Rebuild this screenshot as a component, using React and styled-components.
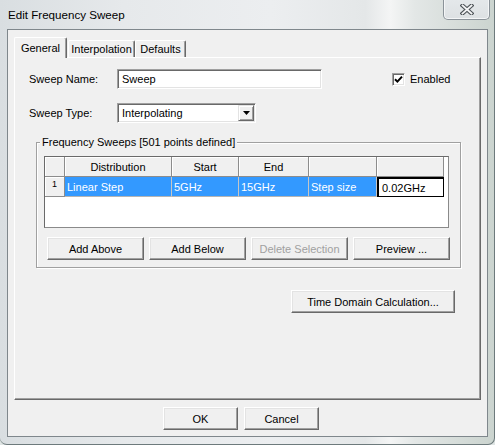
import React from "react";
import styled, { createGlobalStyle } from "styled-components";

const Global = createGlobalStyle`
  html, body { margin: 0; padding: 0; background: #dfe5e4; }
  body { font-family: "Liberation Sans", Arial, sans-serif; }
`;

const Window = styled.div`
  width: 495px;
  height: 445px;
  box-sizing: border-box;
  display: flex;
  flex-direction: column;
  border-right: 1px solid #6d7a7c;
  border-bottom: 1px solid #6d7a7c;
  border-radius: 0 0 7px 7px;
  overflow: hidden;
  background: linear-gradient(90deg, #d9dee1 0%, #e6e9eb 25%, #eceef0 55%, #e4e7e8 74%, #f4f5f5 79%, #e3e7e6 84%, #cbd4cf 100%);
  font-family: "Liberation Sans", Arial, sans-serif;
  font-size: 11px;
  color: #000;
`;

const TitleBar = styled.div`
  height: 29px;
  display: flex;
  align-items: flex-start;
  padding-left: 8px;
  box-sizing: border-box;
`;

const Title = styled.span`
  font-size: 11.6px;
  line-height: 29px;
  color: #000;
`;

const CloseButton = styled.div`
  margin-left: auto;
  margin-right: 4px;
  width: 47px;
  height: 20px;
  box-sizing: border-box;
  border: 1px solid #8b9399;
  border-top: none;
  border-radius: 0 0 5px 5px;
  box-shadow: inset 0 -1px 0 #f4f6f7, inset 1px 0 0 #f4f6f7, inset -1px 0 0 #f4f6f7;
  background: linear-gradient(180deg, #e4e8ea 0%, #dde1e3 100%);
  display: flex;
  align-items: center;
  justify-content: center;
`;

const Client = styled.div`
  margin: 0 6px 0 7px;
  height: 408px;
  box-sizing: border-box;
  border: 1px solid #7f878c;
  background: #f0f0f0;
  padding: 7px 0 0 6px;
  display: flex;
  flex-direction: column;
`;

const TabStrip = styled.div`
  display: flex;
  align-items: flex-end;
  height: 20px;
  position: relative;
  z-index: 1;
`;

const Tab = styled.div`
  width: ${(p) => p.$w}px;
  height: ${(p) => (p.$active ? 21 : 17)}px;
  margin-bottom: ${(p) => (p.$active ? -1 : 0)}px;
  margin-left: ${(p) => p.$ml || 0}px;
  box-sizing: border-box;
  border: 1px solid;
  border-color: #fff #696969 transparent #fff;
  border-bottom: none;
  border-radius: 2px 2px 0 0;
  box-shadow: inset -1px 0 0 #a0a0a0;
  background: #f0f0f0;
  display: flex;
  align-items: center;
  justify-content: center;
  padding-bottom: ${(p) => (p.$active ? 1 : 0)}px;
  font-size: 11px;
`;

const Panel = styled.div`
  width: 467px;
  height: 343px;
  box-sizing: border-box;
  border: 1px solid;
  border-color: #fff #696969 #696969 #fff;
  box-shadow: inset -1px -1px 0 #a0a0a0;
  background: #f0f0f0;
  padding: 11px 0 0 14px;
  display: flex;
  flex-direction: column;
`;

const Row = styled.div`
  display: flex;
  align-items: center;
  height: 20px;
  margin-top: ${(p) => p.$mt || 0}px;
`;

const Label = styled.span`
  width: 88px;
  flex: none;
`;

const Sunken = styled.div`
  width: ${(p) => p.$w}px;
  height: 20px;
  box-sizing: border-box;
  border: 1px solid;
  border-color: #a0a0a0 #fff #fff #a0a0a0;
  box-shadow: inset 1px 1px 0 #696969, inset -1px -1px 0 #e3e3e3;
  background: #fff;
  display: flex;
  align-items: center;
  padding: 0 1px 0 4px;
`;

const DropButton = styled.div`
  margin-left: auto;
  width: 16px;
  height: 16px;
  box-sizing: border-box;
  border: 1px solid;
  border-color: #e3e3e3 #696969 #696969 #e3e3e3;
  box-shadow: inset 1px 1px 0 #fff, inset -1px -1px 0 #a0a0a0;
  background: #f0f0f0;
  display: flex;
  align-items: center;
  justify-content: center;
`;

const CheckWrap = styled.label`
  margin-left: 70px;
  display: flex;
  align-items: center;
  gap: 5px;
`;

const CheckBox = styled.span`
  width: 13px;
  height: 13px;
  box-sizing: border-box;
  border: 1px solid;
  border-color: #a0a0a0 #fff #fff #a0a0a0;
  box-shadow: inset 1px 1px 0 #696969, inset -1px -1px 0 #e3e3e3;
  background: #fff;
  display: flex;
  align-items: center;
  justify-content: center;
`;

const GroupBox = styled.div`
  position: relative;
  margin: 19px 0 0 7px;
  width: 425px;
  height: 126px;
  box-sizing: border-box;
  border: 1px solid #a0a0a0;
  box-shadow: inset 1px 1px 0 #fff, 1px 1px 0 #fff;
  padding: 13px 0 0 7px;
  display: flex;
  flex-direction: column;
`;

const Legend = styled.span`
  position: absolute;
  left: 3px;
  top: -8px;
  padding: 0 2px;
  background: #f0f0f0;
  line-height: 14px;
`;

const Grid = styled.div`
  width: 405px;
  height: 72px;
  box-sizing: border-box;
  border: 1px solid #6a6a6a;
  border-right-color: #8a8a8a;
  border-bottom-color: #8a8a8a;
  background: #fff;
  display: grid;
  grid-template-columns: 20px 107px 67px 70px 68px 67px;
  grid-auto-rows: 20px;
  align-content: start;
`;

const HeadCell = styled.div`
  box-sizing: border-box;
  background: #f0f0f0;
  border-right: 1px solid #8c8c8c;
  border-bottom: 1px solid #8c8c8c;
  box-shadow: inset 1px 1px 0 #fff;
  display: flex;
  align-items: ${(p) => (p.$top ? "flex-start" : "center")};
  justify-content: center;
  font-size: ${(p) => (p.$small ? 9 : 11)}px;
  padding-top: ${(p) => (p.$top ? 2 : 0)}px;
`;

const DataCell = styled.div`
  box-sizing: border-box;
  background: #3399ff;
  color: #fff;
  border-right: 1px solid #c6c6c6;
  border-bottom: 1px solid #b4b4b4;
  display: flex;
  align-items: center;
  padding-left: 2px;
  white-space: nowrap;
`;

const EditCell = styled.div`
  box-sizing: border-box;
  background: #fff;
  color: #000;
  border-style: solid;
  border-color: #000;
  border-width: 2px 1px 1px 2px;
  display: flex;
  align-items: center;
  padding-left: 3px;
`;

const ButtonRow = styled.div`
  display: flex;
  gap: ${(p) => p.$gap}px;
  margin-top: ${(p) => p.$mt}px;
  padding-left: ${(p) => p.$pl || 0}px;
`;

const Button = styled.button`
  width: ${(p) => p.$w}px;
  height: 23px;
  margin-top: ${(p) => p.$mt || 0}px;
  margin-left: ${(p) => p.$ml || 0}px;
  box-sizing: border-box;
  border: 1px solid;
  border-color: #fff #696969 #696969 #fff;
  box-shadow: inset -1px -1px 0 #a0a0a0, inset 1px 1px 0 #e3e3e3;
  background: #f0f0f0;
  font-family: "Liberation Sans", Arial, sans-serif;
  font-size: 11px;
  color: ${(p) => (p.disabled ? "#a0a0a0" : "#000")};
  padding: 0;
  flex: none;
`;

export default function App() {
  return (
    <>
      <Global />
      <Window>
        <TitleBar>
          <Title>Edit Frequency Sweep</Title>
          <CloseButton>
            <svg width="14" height="11" viewBox="0 0 14 11">
              <path d="M2.5 1.5 L11.5 9.5 M11.5 1.5 L2.5 9.5" stroke="#4f5559" strokeWidth="4" strokeLinecap="square" />
              <path d="M2.5 1.5 L11.5 9.5 M11.5 1.5 L2.5 9.5" stroke="#f4f5f6" strokeWidth="1.8" strokeLinecap="square" />
            </svg>
          </CloseButton>
        </TitleBar>
        <Client>
          <TabStrip>
            <Tab $w={53} $active>General</Tab>
            <Tab $w={67} $ml={1}>Interpolation</Tab>
            <Tab $w={51}>Defaults</Tab>
          </TabStrip>
          <Panel>
            <Row>
              <Label>Sweep Name:</Label>
              <Sunken $w={205}>Sweep</Sunken>
              <CheckWrap>
                <CheckBox>
                  <svg width="9" height="9" viewBox="0 0 9 9">
                    <path d="M1 4.2 L3.4 6.6 L8 1.6" stroke="#000" strokeWidth="2" fill="none" />
                  </svg>
                </CheckBox>
                Enabled
              </CheckWrap>
            </Row>
            <Row $mt={14}>
              <Label>Sweep Type:</Label>
              <Sunken $w={139}>
                Interpolating
                <DropButton>
                  <svg width="7" height="4" viewBox="0 0 7 4">
                    <path d="M0 0 H7 L3.5 4 Z" fill="#000" />
                  </svg>
                </DropButton>
              </Sunken>
            </Row>
            <GroupBox>
              <Legend>Frequency Sweeps [501 points defined]</Legend>
              <Grid>
                <HeadCell />
                <HeadCell>Distribution</HeadCell>
                <HeadCell>Start</HeadCell>
                <HeadCell>End</HeadCell>
                <HeadCell />
                <HeadCell />
                <HeadCell $small $top>1</HeadCell>
                <DataCell>Linear Step</DataCell>
                <DataCell>5GHz</DataCell>
                <DataCell>15GHz</DataCell>
                <DataCell>Step size</DataCell>
                <EditCell>0.02GHz</EditCell>
              </Grid>
              <ButtonRow $gap={5} $mt={9} $pl={3}>
                <Button $w={97}>Add Above</Button>
                <Button $w={97}>Add Below</Button>
                <Button $w={97} disabled>Delete Selection</Button>
                <Button $w={97}>Preview ...</Button>
              </ButtonRow>
            </GroupBox>
            <Button $w={164} $mt={22} $ml={262}>Time Domain Calculation...</Button>
          </Panel>
          <ButtonRow $gap={6} $mt={7} $pl={149}>
            <Button $w={75}>OK</Button>
            <Button $w={75}>Cancel</Button>
          </ButtonRow>
        </Client>
      </Window>
    </>
  );
}
